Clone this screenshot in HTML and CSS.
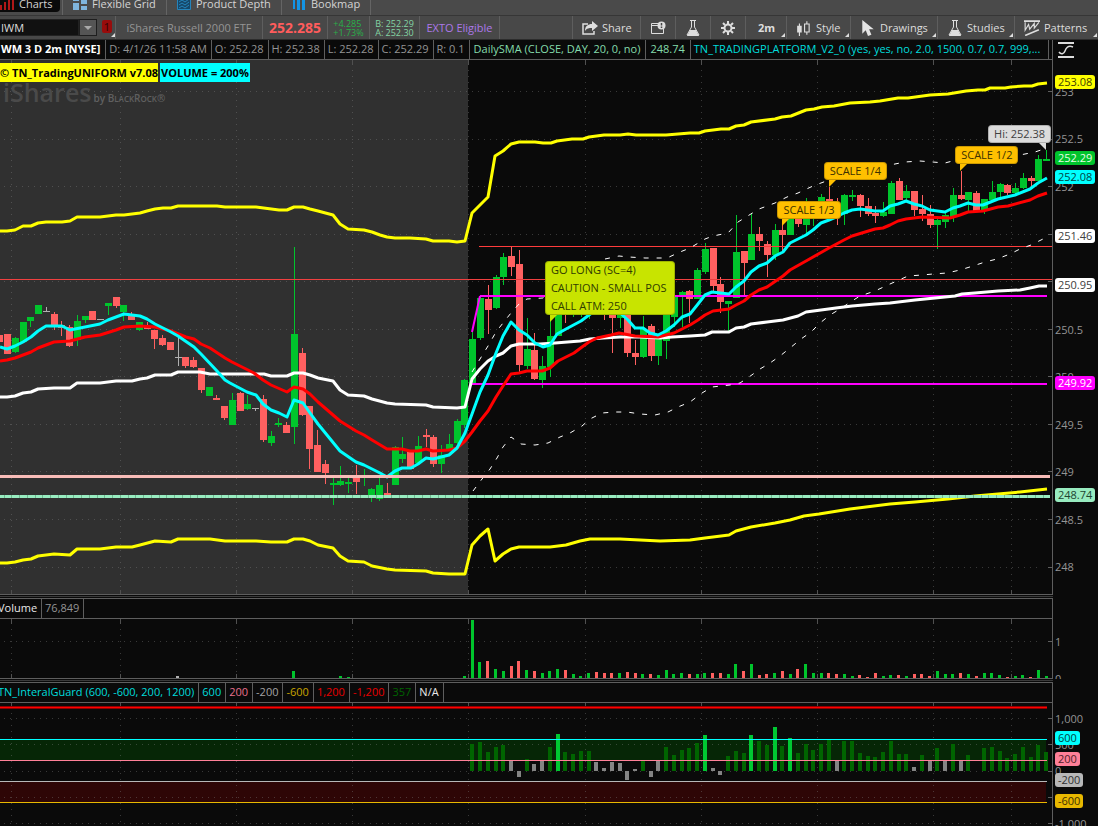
FILE: index.html
```html
<!DOCTYPE html>
<html lang="en">

<head>
    <meta charset="UTF-8">
    <meta name="viewport" content="width=device-width, initial-scale=1.0">
    <title>IWM - Charts</title>
    <link rel="stylesheet" href="styles.css">
</head>

<body>
    <nav class="tabs">
        <a href="#" class="tab active">
            <svg class="tab-icon" viewBox="0 0 14 12"><path fill="#b01818" d="M0 7h2v5H0zM4 4h2v8H4zM8 2h2v10H8zM12 0h2v12h-2z"/></svg>
            Charts
        </a>
        <a href="#" class="tab tab-grid">
            <svg class="tab-icon" viewBox="0 0 14 12"><path fill="#7fb4dc" d="M0 0h6v3H0zM0 5h6v7H0zM8 0h6v6H8zM8 8h6v4H8z"/></svg>
            Flexible Grid
        </a>
        <a href="#" class="tab tab-depth">
            <svg class="tab-icon" viewBox="0 0 14 12"><path fill="#16486a" d="M1 0h12v11H1z"/><path fill="none" stroke="#2484bc" d="M.5 0v11.500h13V0M2 4l3-2 3 2 4-3M2 7l3-2 3 2 4-3M2 10l3-2 3 2 4-3"/></svg>
            Product Depth
        </a>
        <a href="#" class="tab tab-map">
            <svg class="tab-icon" viewBox="0 0 14 12"><path fill="#1494e4" d="M1 0h2v11H1zM5 0h3v12H5zM10 0h3v12h-3z"/></svg>
            Bookmap
        </a>
    </nav>

    <div class="toolbar">
        <div class="symbol">
            <input class="symbol-input" type="text" value="IWM" aria-label="Symbol">
            <button class="symbol-drop" aria-label="Recent symbols"><svg viewBox="0 0 8 4"><path fill="#aaa" d="M0 0h8L4 4z"/></svg></button>
            <button class="link-color corner">1</button>
        </div>
        <div class="cell name">iShares Russell 2000 ETF</div>
        <div class="cell last">252.285</div>
        <div class="cell small change">+4.285<br>+1.73%</div>
        <div class="cell small bidask">B: 252.29<br>A: 252.30</div>
        <div class="cell exto">EXTO Eligible</div>
        <div class="tools">
            <button class="tool share">
                <svg viewBox="0 0 16 14"><path fill="none" stroke="#ddd" stroke-width="1.500" d="M6 3H1v10h11v-3"/><path fill="#ddd" d="M3 10c0-5 3-7 7-7V0l6 5-6 5V7c-3 0-5 0-7 3z"/></svg>
                Share
            </button>
            <button class="tool square" aria-label="Calendar">
                <svg viewBox="0 0 16 14"><path fill="none" stroke="#ddd" d="M9 2.500H1.500v10h12V8M2 4.500h7"/><circle cx="11.500" cy="4.500" r="4" fill="#ddd"/><path stroke="#444" stroke-width="1.500" d="M11.500 2v2.500M11.500 5.500V7"/></svg>
            </button>
            <button class="tool square" aria-label="Edit studies">
                <svg viewBox="0 0 14 16"><path fill="none" stroke="#ddd" d="M4 .5h6M5.500 1v6L1 15h12L8.500 7V1"/><path fill="#ddd" d="M4 10h6l3 6H1z"/></svg>
            </button>
            <button class="tool square" aria-label="Chart settings">
                <svg viewBox="0 0 16 16"><circle cx="8" cy="8" r="3.500" fill="none" stroke="#ddd" stroke-width="2"/><path stroke="#ddd" stroke-width="2" d="M8 1v3M8 12v3M1 8h3M12 8h3M3 3l2 2M11 11l2 2M13 3l-2 2M3 13l2-2"/></svg>
            </button>
            <button class="tool frame corner">2m</button>
            <button class="tool style corner">
                <svg viewBox="0 0 14 14"><path fill="#ddd" d="M1 5h4v6H1zM2.500 3h1v11h-1z"/><path fill="none" stroke="#ddd" d="M7.500 3.500h4v7h-4zM9.500 1v2M9.500 11v2"/></svg>
                Style
            </button>
            <button class="tool drawings corner">
                <svg viewBox="0 0 12 14"><path fill="#e4e4e4" d="M1 0v12l3-3 2 5 3-1-2-5h4z"/></svg>
                Drawings
            </button>
            <button class="tool studies corner">
                <svg viewBox="0 0 14 16"><path fill="none" stroke="#ddd" d="M4 .5h6M5.500 1v6L1 15h12L8.500 7V1"/><path fill="#ddd" d="M4 10h6l3 6H1z"/></svg>
                Studies
            </button>
            <button class="tool patterns corner">
                <svg viewBox="0 0 14 14"><path fill="none" stroke="#ddd" stroke-width="1.500" d="M0 1h14M1 13.500l12-5"/><path fill="none" stroke="#ddd" d="M1 2v7l3-5 1 4 4-5v4l4-5"/></svg>
                Patterns
            </button>
        </div>
    </div>

    <section class="pane">
        <div class="pane-body">
            <div class="pane-head">
                <span class="title">WM 3 D 2m [NYSE]</span>
                <span>D: 4/1/26 11:58 AM</span>
                <span>O: 252.28</span>
                <span>H: 252.38</span>
                <span>L: 252.28</span>
                <span>C: 252.29</span>
                <span>R: 0.1</span>
                <span class="mint">DailySMA (CLOSE, DAY, 20, 0, no)</span>
                <span class="mint">248.74</span>
                <span class="aqua fill">TN_TRADINGPLATFORM_V2_0 (yes, yes, no, 2.0, 1500, 0.7, 0.7, 999,...</span>
            </div>
            <div class="plot">
                <svg id="price" class="price-svg" viewBox="0 60 1052 534" preserveAspectRatio="none"></svg>
                <div class="overlay">
                    <div class="badges">
                        <span class="badge yellow">© TN_TradingUNIFORM v7.08</span>
                        <span class="badge cyan">VOLUME = 200%</span>
                    </div>
                    <div class="watermark">iShares<small>by B<b>LACK</b>R<b>OCK</b>®</small></div>
                </div>
                <div class="callout long">GO LONG (SC=4)<br>CAUTION - SMALL POS<br>CALL ATM: 250</div>
                <div class="callout s3">SCALE 1/3</div>
                <div class="callout s4">SCALE 1/4</div>
                <div class="callout s2">SCALE 1/2</div>
                <div class="callout hi">Hi: 252.38</div>
            </div>
        </div>
        <div class="axis" id="price-axis">
            <svg class="axis-icon" viewBox="0 0 16 16"><path fill="none" stroke="#ddd" stroke-width="2" d="M0 1h16M0 15h16"/><path fill="none" stroke="#ddd" stroke-width="1.500" d="M1 10c2 3 5 2 6-1s3-6 8-4"/></svg>
        </div>
    </section>

    <div class="divider"></div>

    <section class="pane ruled">
        <div class="pane-body">
            <div class="pane-head shifted">
                <span class="white">Volume</span>
                <span>76,849</span>
            </div>
            <div class="plot">
                <svg id="volume" class="volume-svg" viewBox="0 0 1052 59" preserveAspectRatio="none"></svg>
            </div>
        </div>
        <div class="axis" id="volume-axis"></div>
    </section>

    <div class="divider"></div>

    <section class="pane ruled">
        <div class="pane-body">
            <div class="pane-head shifted">
                <span class="aqua">TN_InteralGuard (600, -600, 200, 1200)</span>
                <span class="aqua">600</span>
                <span class="pink">200</span>
                <span class="silver">-200</span>
                <span class="gold">-600</span>
                <span class="red">1,200</span>
                <span class="red">-1,200</span>
                <span class="forest">357</span>
                <span class="white">N/A</span>
            </div>
            <div class="plot last-plot">
                <svg id="guard" class="guard-svg" viewBox="0 0 1052 123" preserveAspectRatio="none"></svg>
            </div>
        </div>
        <div class="axis" id="guard-axis"></div>
    </section>

    <script src="chart.js"></script>
</body>

</html>
```
FILE: styles.css
```css
* {
    box-sizing: border-box;
}

body {
    margin: 0;
    background: #0a0a0a;
    color: #949494;
    font: 11px/18px "Open Sans", "Noto Sans", sans-serif;
    overflow: hidden;
}

button,
input {
    font: inherit;
    color: inherit;
    border: 0;
    margin: 0;
    padding: 0;
    background: none;
}

svg {
    display: block;
}

/* top tabs */
.tabs {
    display: flex;
    height: 16px;
    background: #4a4a4a;
    border-bottom: 1px solid #363636;
}

.tab {
    display: flex;
    align-items: center;
    gap: 5px;
    height: 15px;
    padding: 0 9px 7px 10px;
    border-right: 1px solid #646464;
    color: #d4d4d4;
    line-height: 8px;
    text-decoration: none;
    white-space: nowrap;
}

.tab.active {
    width: 60px;
    height: 12px;
    margin-right: 2px;
    padding: 0 0 4px;
    border-right: 0;
    border-radius: 0 0 4px 0;
    background: #0a0a0a;
}

.tab-grid {
    width: 105px;
    border-left: 1px solid #646464;
}

.tab-depth {
    width: 115px;
}

.tab-map {
    width: 89px;
}

.tab-icon {
    width: 14px;
    height: 12px;
    flex: none;
}

/* toolbar */
.toolbar {
    display: flex;
    height: 24px;
    background: #484848;
    border-bottom: 1px solid #2c2c2c;
}

.symbol {
    display: flex;
    align-items: center;
    width: 116px;
    border-right: 1px solid #5e5e5e;
}

.symbol-input {
    width: 79px;
    height: 17px;
    padding-left: 1px;
    background: #111;
    color: #ddd;
    border: 1px solid #222;
    border-left: 0;
}

.symbol-drop {
    display: flex;
    align-items: center;
    justify-content: center;
    width: 18px;
    height: 17px;
    border: 1px solid #1e1e1e;
    background: #555;
}

.symbol-drop svg {
    width: 8px;
    height: 4px;
}

.corner {
    position: relative;
}

.corner::after {
    content: "";
    position: absolute;
    right: 1px;
    bottom: 2px;
    border-style: solid;
    border-width: 0 0 4px 4px;
    border-color: transparent transparent #ddd;
}

.link-color {
    width: 10px;
    height: 13px;
    margin: 0 0 2px 5px;
    border-radius: 2px;
    background: #980c0c;
    color: #2c0404;
    line-height: 13px;
}

.link-color::after {
    right: -3px;
    bottom: -4px;
}

.cell {
    display: flex;
    align-items: center;
    justify-content: center;
    border-right: 1px solid #5e5e5e;
    white-space: nowrap;
}

.name {
    width: 147px;
}

.last {
    width: 65px;
    color: #ff5c5c;
    font-size: 14px;
    font-weight: bold;
}

.small {
    font-size: 9px;
    line-height: 9px;
}

.change {
    width: 42px;
    color: #28b048;
}

.bidask {
    width: 50px;
    color: #84d4a4;
}

.exto {
    width: 80px;
    color: #ac78e8;
}

.tools {
    display: flex;
    margin-left: auto;
    border-left: 1px solid #5e5e5e;
}

.tool {
    display: flex;
    align-items: center;
    gap: 4px;
    padding-left: 9px;
    border-right: 1px solid #5e5e5e;
    color: #ddd;
}

.tool:last-child {
    border-right: 0;
}

.tool svg {
    flex: none;
    height: 16px;
    width: 16px;
}

.share {
    width: 68px;
}

.square {
    width: 35px;
}

.frame {
    width: 41px;
    padding-left: 12px;
    font-weight: bold;
}

.style {
    width: 64px;
}

.drawings {
    width: 87px;
}

.studies {
    width: 77px;
}

.patterns {
    width: 83px;
}

/* panes */
.pane {
    display: grid;
    grid-template-columns: minmax(0, 1fr) 45px;
}

.ruled .pane-body {
    border-top: 1px solid #5e5e5e;
}

.pane-body {
    border-right: 1px solid #5e5e5e;
}

.pane-head {
    display: flex;
    height: 20px;
    border-bottom: 1px solid #5e5e5e;
    overflow: hidden;
    white-space: nowrap;
}

.pane-head span {
    padding: 0 4px 0 3px;
    border-right: 1px solid #5e5e5e;
}

.pane-head .title {
    padding: 0 5px 0 1px;
    color: #fff;
    font-weight: bold;
}

.pane-head .mint {
    padding: 0 5px 0 4px;
    color: #84dcac;
}

.pane-head .fill {
    flex: 0 1 358px;
    overflow: hidden;
}

.shifted span:first-child {
    margin-left: -5px;
}

.aqua {
    color: #00dcdc;
}

.white {
    color: #e8e8e8;
}

.pink {
    color: #e8708c;
}

.silver {
    color: #a4a4a4;
}

.gold {
    color: #c8a400;
}

.red {
    color: #e80000;
}

.forest {
    color: #006400;
}

.plot {
    position: relative;
    border-bottom: 1px solid #5e5e5e;
}

.last-plot {
    border-bottom: 0;
}

.plot svg {
    width: 100%;
    shape-rendering: crispEdges;
}

.plot svg .smooth {
    shape-rendering: auto;
}

.price-svg {
    height: 534px;
}

.volume-svg {
    height: 59px;
}

.guard-svg {
    height: 123px;
}

.divider {
    height: 3px;
    border-top: 1px solid #0a0a0a;
    border-bottom: 1px solid #0a0a0a;
    background: #3a3a3a;
    margin-right: 45px;
}

/* labels over the price plot */
.overlay {
    position: absolute;
    top: 3px;
    left: 0;
}

.badges {
    display: flex;
    gap: 2px;
}

.badge {
    padding: 0 1px;
    color: #000;
    font-weight: bold;
    line-height: 19px;
    white-space: nowrap;
}

.badge.yellow {
    background: #ffff00;
    padding: 0;
}

.badge.cyan {
    background: #00ffff;
}

.watermark {
    display: flex;
    align-items: baseline;
    gap: 2px;
    padding-left: 3px;
    color: #4a4a4a;
    font-size: 25px;
    font-weight: 600;
    line-height: 20px;
}

.watermark small {
    color: #606060;
    font-size: 10px;
}

.watermark b {
    font-size: 8px;
    font-weight: inherit;
}

.callout {
    position: absolute;
    padding: 0 6px;
    border-radius: 4px;
    background: #ffc000;
    color: #3c3000;
    box-shadow: inset 0 0 0 1px rgba(0, 0, 0, 0.2);
    white-space: nowrap;
}

.callout::after {
    content: "";
    position: absolute;
    left: 5px;
    top: 100%;
    border-style: solid;
    border-width: 7px 7px 0 0;
    border-color: #ffc000 transparent transparent;
}

.callout.long {
    left: 51.800%;
    top: 201px;
    padding-right: 9px;
    background: #c8e400;
    color: #303c00;
}

.callout.long::after {
    border-top-color: #c8e400;
}

.callout.s3 {
    left: 73.900%;
    top: 141px;
}

.callout.s4 {
    left: 78.300%;
    top: 102px;
}

.callout.s2 {
    left: 90.800%;
    top: 86px;
}

.callout.hi {
    right: 1px;
    top: 65px;
    background: #dcdcdc;
    color: #404040;
}

.callout.hi::after {
    left: auto;
    right: 5px;
    border-width: 7px 0 0 7px;
    border-color: #dcdcdc transparent transparent;
}

/* value axes */
.axis {
    position: relative;
    overflow: hidden;
}

.axis-icon {
    width: 16px;
    height: 16px;
    margin: 2px 0 0 5px;
}

.axis-label,
.axis-tag {
    position: absolute;
    left: 2px;
    line-height: 14px;
}

.axis-tag {
    padding: 0 3px;
    border-radius: 3px;
}
```
FILE: chart.js
```javascript
const UP = '#00c42c',
    DOWN = '#ff6060',
    FLAT = '#b0b0b0',
    GRID_X = [11, 120, 236, 352, 468, 585, 701, 817, 933, 1011];

// centre of bar number i
function bx(i) {
    return 7.5 + i * 7.754;
}

function rect(x, y, w, h, c) {
    return `<rect x="${x}" y="${y}" width="${w}" height="${h}" fill="${c}"/>`;
}

function line(x1, y1, x2, y2, c, w = 1, extra = '') {
    return `<line x1="${x1}" y1="${y1}" x2="${x2}" y2="${y2}" stroke="${c}" stroke-width="${w}" ${extra}/>`;
}

function poly(points, c, w, extra = '') {
    return `<polyline class="smooth" points="${points}" fill="none" stroke="${c}" stroke-width="${w}" stroke-linejoin="round" ${extra}/>`;
}

function grid(top, bottom, rows) {
    let s = '';
    rows.forEach(y => {
        s += line(4, y + 0.5, 1040, y + 0.5, '#808080', 1, 'stroke-dasharray="1 5" opacity="0.4"');
        s += line(1048, y + 0.5, 1052, y + 0.5, '#5e5e5e');
    });
    GRID_X.forEach(x => {
        s += line(x + 0.5, top + 10, x + 0.5, bottom - 4, '#808080', 1, 'stroke-dasharray="1 5" opacity="0.4"');
        s += line(x + 0.5, top, x + 0.5, top + 5, '#505050');
        s += line(x + 0.5, bottom - 4, x + 0.5, bottom, '#505050');
    });
    return s;
}

// colour, body top, body bottom, high, low
const candles = `r334,354,334,354 g338,352,337,353 g322,342,322,342 g317,321,317,327 g305,314,305,314
f311,312,307,312 r314,326,312,330 r325,328,321,336 r327,346,325,347 g321,340,315,346
g316,320,316,323 r311,320,311,320 f319,320,319,320 g303,306,303,315 r297,306,297,308
g305,312,305,321 r314,320,312,320 g322,330,322,331 r326,329,322,329 r330,339,330,349
r338,345,335,346 r342,350,342,350 f357,358,338,366 r357,366,357,368 r360,367,357,368
r368,390,368,393 g387,396,387,396 r398,400,395,400 r406,418,406,420 g400,425,393,425
r393,411,392,411 g404,409,395,410 f408,409,408,411 r399,440,395,442 g436,443,431,446
g423,425,418,427 r425,433,422,433 g334,427,247,444 r353,415,348,416 r406,449,406,469
r445,472,430,472 r464,473,460,484 g483,485,478,505 g481,485,466,486 g482,484,478,493
r478,482,465,494 g477,478,469,486 g489,496,488,502 g485,499,478,501 r493,496,483,496
g447,485,446,485 g454,459,437,463 r451,469,451,469 g446,463,436,465 r435,437,429,447
r437,464,435,467 g455,464,445,473 g444,449,434,450 g421,443,419,444 g380,425,379,428
g339,384,332,384 g298,338,296,340 r299,310,285,334 g277,308,275,309 g257,277,253,285
r256,267,247,276 r264,365,250,372 g349,366,318,369 r350,379,333,380 g366,380,356,388
g336,367,321,377 g312,336,312,336 r300,312,300,323 g300,312,300,317 g300,312,300,317
g300,314,300,319 r300,312,300,312 r300,314,300,320 r305,318,300,353 g305,318,300,328
r305,353,305,357 r353,357,340,365 g329,357,316,358 r326,356,324,361 g338,356,336,365
g312,341,312,359 g296,317,296,327 g292,297,291,327 r291,299,290,323 g270,299,268,299
g249,272,243,274 r248,286,248,292 r284,302,277,313 g301,304,301,331 g252,298,215,298
r251,263,251,295 g234,260,213,260 r234,241,227,251 r244,255,241,277 g230,255,224,260
r230,235,224,251 g215,235,215,235 r215,224,215,227 g215,225,198,233 g212,215,212,226
g197,210,194,210 r199,210,187,210 r205,216,198,225 g195,214,194,225 g195,197,190,201
r195,206,194,217 r206,214,198,216 r213,216,206,223 g212,216,202,217 g183,214,181,214
r181,200,178,200 g191,198,185,200 r191,210,191,216 r209,214,195,221 r214,225,205,228
g220,225,216,249 g215,222,213,228 g195,217,188,222 r195,199,171,200 g192,200,192,212
r193,211,191,212 g199,211,199,214 g192,200,181,200 g184,192,183,198 r185,193,184,195
g188,193,183,194 g178,188,173,189 r178,181,176,187 g159,181,155,181 g159,161,150,161`.split(/\s+/);

const upper = '0,231 7,231 15,230 23,226 31,226 38,223 46,222 62,222 70,221 77,217 100,217 116,215 124,215 140,213 147,211 155,209 163,208 171,208 178,206 217,206 225,207 256,207 279,210 287,210 294,207 303,207 310,209 318,211 333,215 340,224 348,229 364,230 372,232 380,235 387,237 395,238 410,238 426,239 433,241 449,241 457,242 465,241 472,213 480,205 488,197 495,156 503,151 511,144 519,142 535,142 543,143 551,143 557,141 572,139 583,139 589,137 604,135 620,135 628,134 636,135 666,135 690,133 699,133 705,131 721,129 729,129 736,126 744,125 751,122 775,119 782,117 791,116 806,110 814,109 822,107 834,106 850,103 870,102 880,101 898,98 908,98 930,95 948,94 966,91 978,90 985,90 990,88 1005,88 1011,87 1024,86 1032,86 1038,84 1047,83';
const lower = '0,563 7,563 15,562 23,560 31,559 38,556 54,554 70,555 77,549 100,549 116,547 132,547 140,545 155,541 171,542 178,539 210,539 225,541 256,541 271,542 287,542 294,539 303,539 310,541 318,545 333,548 340,556 348,561 364,562 372,566 387,569 395,570 426,571 433,573 449,574 465,574 472,545 480,536 488,529 495,561 503,554 511,549 519,547 550,547 566,545 580,541 590,539 620,539 640,540 660,541 690,540 705,538 729,535 736,531 751,527 775,523 790,520 804,516 819,514 850,509 890,504 915,502 948,499 975,496 998,494 1020,492 1038,490 1047,489';
const middle = '0,397 7,397 15,396 23,393 31,392 38,389 54,388 70,388 77,383 100,383 116,381 132,381 140,379 147,378 155,375 171,375 178,372 200,372 210,374 264,374 271,376 287,376 294,373 303,373 310,375 318,378 333,381 340,390 348,395 364,396 372,399 387,403 395,404 426,405 433,407 457,408 465,407 472,379 480,369 488,361 496,356 503,353 511,346 519,344 540,344 555,343 580,341 590,339 603,338 620,337 640,337 660,338 672,337 690,336 705,335 712,332 729,332 736,328 744,327 751,324 767,322 783,320 798,316 806,312 821,310 836,308 852,306 875,304 890,303 915,300 935,298 955,296 962,294 975,293 998,291 1020,290 1030,288 1039,286 1047,286';
const slow = '0,361 7,360 15,358 23,355 31,352 38,348 46,345 54,342 70,341 85,337 100,335 116,330 124,327 140,326 155,327 171,331 186,337 194,339 201,344 210,348 225,358 232,362 240,366 254,373 263,380 271,385 287,392 294,387 303,389 310,394 318,402 340,421 356,431 364,435 372,440 387,449 402,449 410,451 418,451 426,449 433,451 449,450 457,448 465,441 472,432 480,421 488,411 496,397 503,386 511,374 519,373 527,371 542,371 550,368 558,361 574,353 582,347 589,342 597,338 611,335 619,333 635,336 658,337 666,335 674,333 682,329 690,325 698,320 705,315 713,311 729,309 736,305 744,301 751,295 759,290 767,287 783,276 790,270 806,261 829,248 844,240 852,236 875,229 883,228 890,225 898,221 906,219 922,217 950,218 960,215 968,212 983,211 998,207 1008,206 1030,200 1038,196 1047,193';
const fast = '0,347 7,349 15,346 23,342 31,337 38,331 46,326 62,326 70,330 85,327 100,324 108,320 124,314 140,316 147,319 155,324 171,332 178,336 194,347 201,354 217,371 225,380 230,383 247,392 256,395 263,404 271,410 279,413 287,417 294,400 303,403 310,413 318,424 340,451 356,462 364,465 380,473 387,477 395,471 402,468 411,468 418,464 426,458 433,459 449,455 457,448 465,433 472,414 480,392 488,375 496,353 503,336 511,322 519,330 527,335 535,343 543,347 550,345 557,334 566,329 581,321 589,315 597,309 619,312 628,320 635,328 643,328 650,333 658,335 666,331 674,325 682,317 690,314 698,304 705,295 712,292 729,294 736,287 744,281 751,272 759,266 767,263 775,256 783,252 790,243 806,235 813,230 821,223 829,220 836,217 844,213 852,210 860,209 875,211 883,211 890,206 898,204 906,201 914,204 922,206 930,210 945,212 953,208 960,206 968,203 976,205 983,205 998,199 1015,195 1030,189 1038,183 1047,178';
const dashUp = '472,372 480,359 488,346 496,332 503,323 511,313 519,304 527,299 543,298 560,285 590,265 605,259 619,256 629,257 645,258 667,258 680,252 690,248 705,239 713,236 728,233 738,222 746,217 759,209 775,203 787,197 798,193 813,186 829,180 850,172 875,164 890,165 905,162 920,161 945,163 960,159 1020,155 1035,152 1047,148';
const dashDown = '473,491 482,479 490,469 497,458 503,447 511,437 521,444 535,445 548,443 560,437 570,433 582,426 590,419 602,413 615,412 627,412 640,414 655,415 668,412 678,407 690,402 702,393 712,387 730,385 740,383 749,377 760,369 770,363 780,356 790,348 801,339 811,332 820,323 830,315 840,309 852,301 860,296 875,291 890,284 908,276 922,275 933,274 947,273 960,270 973,266 985,262 997,259 1010,254 1020,249 1031,245 1043,239 1047,236';

function drawPrice() {
    let s = rect(0, 60, 468, 534, '#303030');
    s += grid(60, 594, [91, 139, 186, 234, 281, 329, 376, 424, 471, 519, 567]);
    s += rect(0, 335, 3, 7, DOWN);
    candles.forEach((row, i) => {
        const c = { g: UP, r: DOWN, f: FLAT }[row[0]],
            [top, bottom, high, low] = row.slice(1).split(',').map(Number),
            x = Math.round(bx(i) - 0.5);
        s += rect(x, high, 1, low - high, c) + rect(x - 3, top, 7, bottom - top, c);
    });
    s += line(0, 279.5, 1052, 279.5, '#f04040');
    s += line(479, 246.5, 1052, 246.5, '#ff3c3c');
    s += poly('472,332 480,296', '#ff00ff', 2);
    s += rect(480, 295, 567, 2, '#ff00ff') + rect(472, 383, 575, 2, '#ff00ff');
    s += poly(dashUp, '#fff', 1, 'stroke-dasharray="5 8"');
    s += poly(dashDown, '#fff', 1, 'stroke-dasharray="5 8"');
    s += poly(upper, '#ffff00', 3) + poly(lower, '#ffff00', 3);
    s += poly(middle, '#ffffff', 3) + poly(slow, '#ff0000', 3) + poly(fast, '#00ffff', 3);
    s += rect(0, 475, 1050, 3, '#f8bcb8') + rect(0, 495, 1050, 3, '#98ecc0');
    for (let i = 0; i < 135; i++) s += rect(Math.round(bx(i) - 4), 495, 1, 3, '#70b890');
    document.getElementById('price').innerHTML = s;
}

// first bar of the session is number 59
const volume = 'g2 g58 g16 r17 g9 g7 r12 r17 g8 r7 g5 g7 g9 r8 g4 g2 g5 r6 r5 r5 g5 r6 r5 g4 r4 g3 g8 g4 g5 r4 g4 g5 r5 r5 g4 g14 r7 g14 r3 r4 g5 r7 g4 r9 g14 g5 g5 r5 r4 g4 g2 r3 r1 r5 g2 g3 r3 g2 r4 r4 r2 g7 g4 g4 r5 g4 r2 g5 g5 g3 r1 g2 g3 r1 g8 g2'.split(' ');

function drawVolume() {
    let s = grid(0, 59, [22]);
    s += rect(176, 57, 3, 2, FLAT) + rect(292, 52, 3, 7, UP) + rect(339, 57, 3, 2, UP) + rect(347, 58, 3, 1, UP);
    volume.forEach((v, i) => {
        const h = Number(v.slice(1));
        s += rect(Math.round(bx(i + 59) - 2), 59 - h, 3, h, v[0] === 'g' ? UP : DOWN);
    });
    document.getElementById('volume').innerHTML = s;
}

// d = dark green, b = bright green, n = neutral
const guard = 'd27 d29 d19 d24 d26 n10 n-6 d12 n7 n10 d24 b37 d19 d17 d20 d20 n9 n3 n9 n8 n-9 n2 d10 n-6 n10 d24 d16 d21 d23 d28 b36 n3 n-4 d15 d20 d18 b36 d30 d26 b44 d25 b33 d18 d27 d21 d27 d31 n10 d30 d30 d18 d15 d14 d19 d30 d17 d17 n4 d16 n10 d23 n10 d27 n10 d16 d0 d23 d24 d20 d13 d17 d24 d14 d26 d19'.split(' ');

function drawGuard() {
    let s = rect(0, 36, 1046, 21, '#062606') + rect(0, 78, 1046, 21, '#2e0606');
    s += grid(0, 127, [15, 41, 68, 94, 120]);
    guard.forEach((v, i) => {
        const h = Number(v.slice(1)),
            c = { d: '#006400', b: '#00c832', n: '#848484' }[v[0]];
        s += rect(Math.floor(bx(i + 60) - 2), h > 0 ? 68 - h : 68, 4, Math.abs(h), c);
    });
    s += rect(0, 3, 1047, 3, '#900000') + rect(0, 4, 1047, 1, '#ff0000');
    s += rect(0, 36, 1047, 1, '#00ffff') + rect(0, 57, 1047, 1, '#ff8098');
    s += rect(0, 78, 1047, 1, '#b8b8b8') + rect(0, 99, 1047, 1, '#e8b800');
    document.getElementById('guard').innerHTML = s;
}

// entries are [text, centre y, background, text colour]
function drawAxis(id, entries) {
    entries.forEach(([text, y, bg, color]) => {
        const el = document.createElement('span');
        el.className = bg ? 'axis-tag' : 'axis-label';
        el.textContent = text;
        el.style.top = (y - 7) + 'px';
        if (bg) {
            el.style.background = bg;
            el.style.color = color;
        }
        document.getElementById(id).append(el);
    });
}

drawPrice();
drawVolume();
drawGuard();

drawAxis('price-axis', [
    ['253', 52], ['252.5', 99], ['252', 147], ['250.5', 290], ['250', 337], ['249.5', 385],
    ['249', 432], ['248.5', 480], ['248', 527],
    ['253.08', 42, '#ffff00', '#404000'], ['252.29', 118, '#00c42c', '#e8ffe8'],
    ['252.08', 137, '#00ffff', '#004444'], ['251.46', 196, '#ffffff', '#404040'],
    ['250.95', 245, '#ffffff', '#404040'], ['249.92', 343, '#ff00ff', '#ffffff'],
    ['248.74', 455, '#98ecc0', '#204430']
]);
drawAxis('volume-axis', [['1', 44], ['0', 81]]);
drawAxis('guard-axis', [
    ['1,000', 37], ['500', 63], ['0', 89], ['-1,000', 142],
    ['600', 56, '#00ffff', '#004444'], ['200', 77, '#ff8098', '#502028'],
    ['-200', 98, '#b8b8b8', '#303030'], ['-600', 119, '#e8b800', '#403000']
]);
```
